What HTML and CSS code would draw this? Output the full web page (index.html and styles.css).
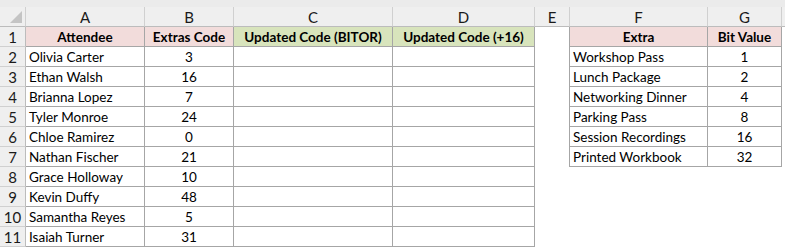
FILE: index.html
```html
<!DOCTYPE html>
<html>
<head>
<meta charset="utf-8">
<link rel="stylesheet" href="styles.css">
</head>
<body>
<div class="topstrip"></div>
<div class="sheet">
  <div class="corner"><span class="tri"></span></div>
  <div class="ch">A</div><div class="ch">B</div><div class="ch">C</div><div class="ch">D</div><div class="ch">E</div><div class="ch">F</div><div class="ch">G</div><div class="ch last"></div>

  <div class="rh">1</div>
  <div class="c b hp bold ctr">Attendee</div><div class="c b hp bold ctr">Extras Code</div><div class="c b hg bold ctr">Updated Code (BITOR)</div><div class="c b hg bold ctr">Updated Code (+16)</div><div class="c e eb"></div><div class="c b hp bold ctr">Extra</div><div class="c b hp bold ctr">Bit Value</div><div class="c"></div>

  <div class="rh">2</div>
  <div class="c b">Olivia Carter</div><div class="c b ctr">3</div><div class="c b"></div><div class="c b"></div><div class="c e eb"></div><div class="c b">Workshop Pass</div><div class="c b ctr">1</div><div class="c"></div>

  <div class="rh">3</div>
  <div class="c b">Ethan Walsh</div><div class="c b ctr">16</div><div class="c b"></div><div class="c b"></div><div class="c e eb"></div><div class="c b">Lunch Package</div><div class="c b ctr">2</div><div class="c"></div>

  <div class="rh">4</div>
  <div class="c b">Brianna Lopez</div><div class="c b ctr">7</div><div class="c b"></div><div class="c b"></div><div class="c e eb"></div><div class="c b">Networking Dinner</div><div class="c b ctr">4</div><div class="c"></div>

  <div class="rh">5</div>
  <div class="c b">Tyler Monroe</div><div class="c b ctr">24</div><div class="c b"></div><div class="c b"></div><div class="c e eb"></div><div class="c b">Parking Pass</div><div class="c b ctr">8</div><div class="c"></div>

  <div class="rh">6</div>
  <div class="c b">Chloe Ramirez</div><div class="c b ctr">0</div><div class="c b"></div><div class="c b"></div><div class="c e eb"></div><div class="c b">Session Recordings</div><div class="c b ctr">16</div><div class="c"></div>

  <div class="rh">7</div>
  <div class="c b">Nathan Fischer</div><div class="c b ctr">21</div><div class="c b"></div><div class="c b"></div><div class="c e eb"></div><div class="c b">Printed Workbook</div><div class="c b ctr">32</div><div class="c"></div>

  <div class="rh">8</div>
  <div class="c b">Grace Holloway</div><div class="c b ctr">10</div><div class="c b"></div><div class="c b"></div><div class="c e"></div><div class="c"></div><div class="c"></div><div class="c"></div>

  <div class="rh">9</div>
  <div class="c b">Kevin Duffy</div><div class="c b ctr">48</div><div class="c b"></div><div class="c b"></div><div class="c e"></div><div class="c"></div><div class="c"></div><div class="c"></div>

  <div class="rh">10</div>
  <div class="c b">Samantha Reyes</div><div class="c b ctr">5</div><div class="c b"></div><div class="c b"></div><div class="c e"></div><div class="c"></div><div class="c"></div><div class="c"></div>

  <div class="rh">11</div>
  <div class="c b">Isaiah Turner</div><div class="c b ctr">31</div><div class="c b"></div><div class="c b"></div><div class="c e"></div><div class="c"></div><div class="c"></div><div class="c"></div>
</div>
</body>
</html>
```

FILE: styles.css
```css
html, body {
  margin: 0;
  padding: 0;
  background: #ffffff;
}
body {
  font-family: "Lato", "Liberation Sans", sans-serif;
  font-size: 13.5px;
  color: #000;
  width: 785px;
  height: 248px;
  overflow: hidden;
}
.topstrip {
  height: 7px;
  background: #ebebeb;
}
.sheet {
  display: grid;
  grid-template-columns: 26px 119px 89px 159px 142px 35px 138px 74px 3px;
  grid-auto-rows: 20px;
}
.sheet > div {
  box-sizing: border-box;
  line-height: 20px;
  white-space: nowrap;
  overflow: hidden;
}
.corner {
  background: #efefef;
  border-right: 1px solid #d0d0d0;
  border-bottom: 1px solid #bcbcbc;
  position: relative;
}
.tri {
  position: absolute;
  right: 3px;
  bottom: 3px;
  width: 0;
  height: 0;
  border-left: 12px solid transparent;
  border-bottom: 12px solid #c4c4c4;
}
.ch {
  background: #efefef;
  border-right: 1px solid #d0d0d0;
  border-bottom: 1px solid #bcbcbc;
  text-align: center;
  color: #1a1a1a;
  font-size: 15px;
}
.ch.last {
  border-right: none;
}
.rh {
  background: #efefef;
  border-right: 1px solid #bcbcbc;
  border-bottom: 1px solid #d0d0d0;
  text-align: center;
  color: #1a1a1a;
  font-size: 15px;
}
.c {
  padding-left: 3px;
  background: #fff;
}
.b {
  border-right: 1px solid #a6a6a6;
  border-bottom: 1px solid #a6a6a6;
}
.eb {
  border-right: 1px solid #a6a6a6;
}
.ctr {
  text-align: center;
  padding-left: 0;
}
.bold {
  font-weight: 700;
}
.hp {
  background: #f2dcdb;
}
.hg {
  background: #d8e4bc;
}
```
